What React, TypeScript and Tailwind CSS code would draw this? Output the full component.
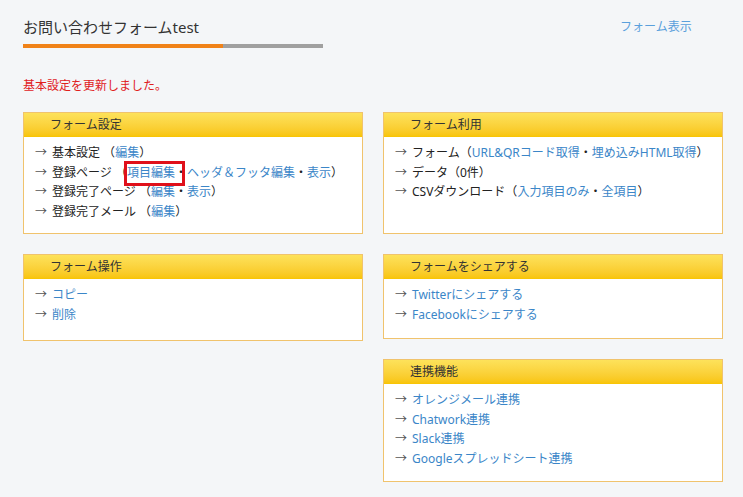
import React from "react";

const L = ({ children }: { children: React.ReactNode }) => <span className="text-[#3b86c8]">{children}</span>;

function Box({ title, children, h }: { title: string; children: React.ReactNode; h: string }) {
  return (
    <div className={`border border-[#f0c36d] bg-white ${h}`}>
      <div className="h-[24px] bg-gradient-to-b from-[#fde25a] to-[#f8c400] pl-[26px] text-[12px] leading-[24px] text-[#333]">{title}</div>
      <div className="pl-[11px] pt-[6px] text-[12px] leading-[19.5px] text-[#222]">{children}</div>
    </div>
  );
}

const Row = ({ children }: { children: React.ReactNode }) => (
  <div className="flex"><span className="w-[17px] text-[#555]">→</span><span>{children}</span></div>
);

export default function App() {
  return (
    <div className="h-[497px] w-[743px] bg-[#f4f6f8] px-[23px]" style={{ fontFamily: '"Noto Sans","Noto Sans CJK JP",sans-serif' }}>
      <div className="flex pt-[16px]">
        <div className="w-[300px]">
          <div className="text-[15px] leading-[22px] text-[#333]">お問い合わせフォームtest</div>
          <div className="mt-[6px] flex h-[4px]"><div className="w-[200px] bg-[#f08218]" /><div className="flex-1 bg-[#a0a0a0]" /></div>
        </div>
        <div className="ml-[297px] text-[12px] leading-[22px] text-[#5aa0dc]">フォーム表示</div>
      </div>
      <div className="mt-[29px] text-[12px] leading-[18px] text-[#e0201c]">基本設定を更新しました。</div>
      <div className="mt-[17px] grid grid-cols-[340px_340px] gap-x-[20px]">
        <div className="flex flex-col gap-[20px]">
          <Box title="フォーム設定" h="h-[122px]">
            <Row>基本設定 （<L>編集</L>）</Row>
            <Row>登録ページ （<span className="relative"><span className="absolute -left-[3px] -top-[3px] h-[25px] w-[61px] border-[3px] border-[#e0101a]" /><L>項目編集</L></span>・<L>ヘッダ＆フッタ編集</L>・<L>表示</L>）</Row>
            <Row>登録完了ページ （<L>編集</L>・<L>表示</L>）</Row>
            <Row>登録完了メール （<L>編集</L>）</Row>
          </Box>
          <Box title="フォーム操作" h="h-[87px]">
            <Row><L>コピー</L></Row>
            <Row><L>削除</L></Row>
          </Box>
        </div>
        <div className="flex flex-col gap-[20px]">
          <Box title="フォーム利用" h="h-[122px]">
            <Row>フォーム（<L>URL&amp;QRコード取得</L>・<L>埋め込みHTML取得</L>）</Row>
            <Row>データ（0件）</Row>
            <Row>CSVダウンロード（<L>入力項目のみ</L>・<L>全項目</L>）</Row>
          </Box>
          <Box title="フォームをシェアする" h="h-[85px]">
            <Row><L>Twitterにシェアする</L></Row>
            <Row><L>Facebookにシェアする</L></Row>
          </Box>
          <Box title="連携機能" h="h-[123px]">
            <Row><L>オレンジメール連携</L></Row>
            <Row><L>Chatwork連携</L></Row>
            <Row><L>Slack連携</L></Row>
            <Row><L>Googleスプレッドシート連携</L></Row>
          </Box>
        </div>
      </div>
    </div>
  );
}
